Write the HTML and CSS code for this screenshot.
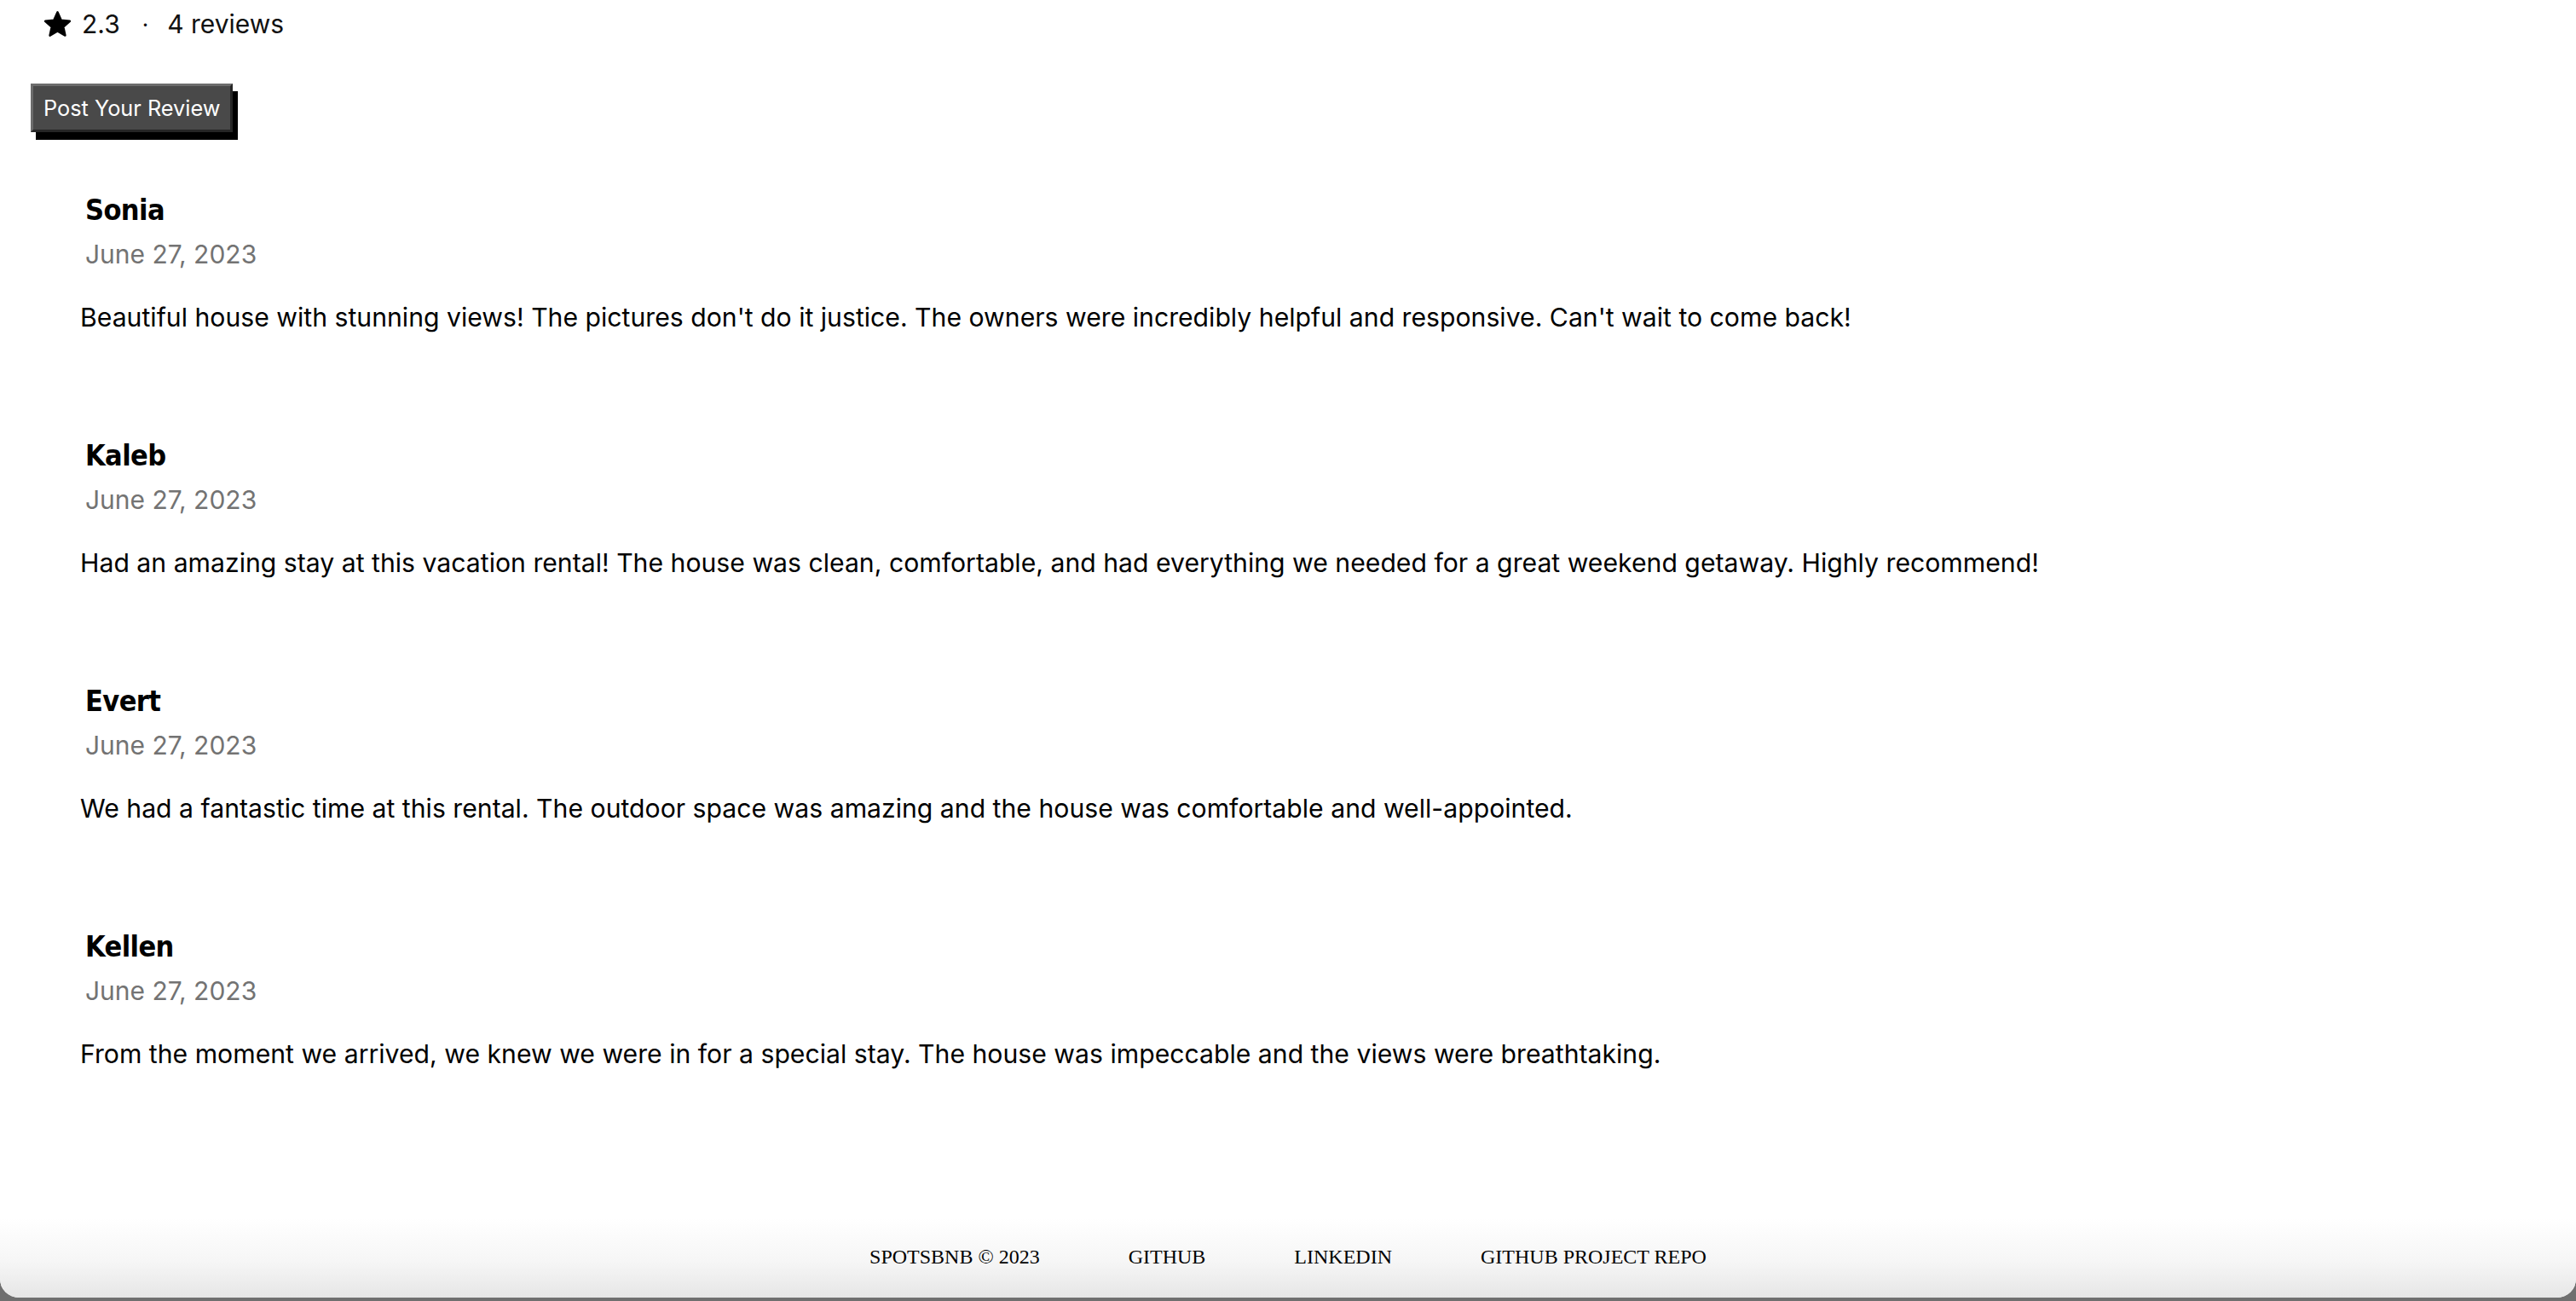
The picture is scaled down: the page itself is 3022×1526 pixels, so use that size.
FILE: index.html
```html
<!DOCTYPE html>
<html lang="en">
<head>
<meta charset="utf-8">
<title>Spotsbnb reviews</title>
<link rel="stylesheet" href="styles.css">
</head>
<body>
<div class="window">
  <main class="page">
    <div class="rating">
      <svg class="star" viewBox="0 0 24 24" aria-hidden="true"><path d="M12 2.8l2.75 6.05 6.6.7-4.95 4.45 1.4 6.5L12 17.2l-5.8 3.3 1.4-6.5-4.95-4.450 6.6-.7z"/></svg>
      <span class="avg">2.3</span>
      <span class="dot">·</span>
      <span class="count">4 reviews</span>
    </div>
    <button class="post-btn">Post Your Review</button>
    <section class="reviews">
      <article class="review">
        <h3 class="name">Sonia</h3>
        <div class="date">June 27, 2023</div>
        <p class="text">Beautiful house with stunning views! The pictures don't do it justice. The owners were incredibly helpful and responsive. Can't wait to come back!</p>
      </article>
      <article class="review">
        <h3 class="name">Kaleb</h3>
        <div class="date">June 27, 2023</div>
        <p class="text">Had an amazing stay at this vacation rental! The house was clean, comfortable, and had everything we needed for a great weekend getaway. Highly recommend!</p>
      </article>
      <article class="review">
        <h3 class="name">Evert</h3>
        <div class="date">June 27, 2023</div>
        <p class="text">We had a fantastic time at this rental. The outdoor space was amazing and the house was comfortable and well-appointed.</p>
      </article>
      <article class="review">
        <h3 class="name">Kellen</h3>
        <div class="date">June 27, 2023</div>
        <p class="text">From the moment we arrived, we knew we were in for a special stay. The house was impeccable and the views were breathtaking.</p>
      </article>
    </section>
    <footer class="footer">
      <span class="foot-item">SPOTSBNB © 2023</span>
      <a class="foot-item" href="#">GITHUB</a>
      <a class="foot-item" href="#">LINKEDIN</a>
      <a class="foot-item" href="#">GITHUB PROJECT REPO</a>
    </footer>
  </main>
</div>
</body>
</html>
```

FILE: styles.css
```css
html, body {
  margin: 0;
  padding: 0;
}
body {
  background: #6f6f6f;
  height: 1526px;
  overflow: hidden;
  font-family: Inter, "Liberation Sans", sans-serif;
}
.window {
  height: 1522px;
  background: #ffffff;
  border-radius: 0 0 22px 22px;
  overflow: hidden;
}
.page {
  height: 100%;
  display: flex;
  flex-direction: column;
}
.page > * {
  flex-shrink: 0;
}
.rating {
  display: flex;
  align-items: center;
  height: 56px;
  padding-left: 49px;
  font-size: 30px;
  color: #111;
}
.star {
  width: 37px;
  height: 37px;
  fill: #000;
  stroke: #000;
  stroke-width: 1.6;
  stroke-linejoin: round;
  margin-right: 10px;
}
.dot {
  margin: 0 22px 0 26px;
  font-size: 26px;
}
.post-btn {
  align-self: flex-start;
  margin: 42px 0 0 36px;
  height: 57px;
  padding: 0 12px;
  background: #494949;
  color: #fff;
  font-family: Inter, "Liberation Sans", sans-serif;
  font-size: 25.3px;
  border: 3px solid;
  border-color: #6c6c6c #262626 #262626 #6c6c6c;
  box-shadow: 6px 9px 0 #000;
  cursor: pointer;
}
.reviews {
  padding-left: 94px;
  margin-top: 71px;
}
.review + .review {
  margin-top: 122px;
}
.name {
  margin: 0 0 15px 6px;
  font-family: "DejaVu Sans Condensed", "DejaVu Sans", sans-serif;
  font-stretch: condensed;
  font-weight: bold;
  font-size: 34px;
  line-height: 40px;
  letter-spacing: -0.6px;
  color: #000;
}
.date {
  margin-left: 6px;
  font-size: 30px;
  line-height: 34px;
  color: #737373;
}
.text {
  margin: 37px 0 0 0;
  font-size: 30.2px;
  line-height: 40px;
  color: #000;
}
.footer {
  margin-top: auto;
  height: 170px;
  display: flex;
  justify-content: center;
  align-items: flex-start;
  padding: 108px 0 0 0;
  box-sizing: border-box;
  gap: 104px;
  background: linear-gradient(#fff 0, #fff 45%, #f6f6f6 75%, #e6e6e6 100%);
  font-family: "Liberation Serif", "Times New Roman", serif;
  font-size: 24px;
  line-height: 28px;
}
.foot-item {
  color: #000;
  text-decoration: none;
}
```
